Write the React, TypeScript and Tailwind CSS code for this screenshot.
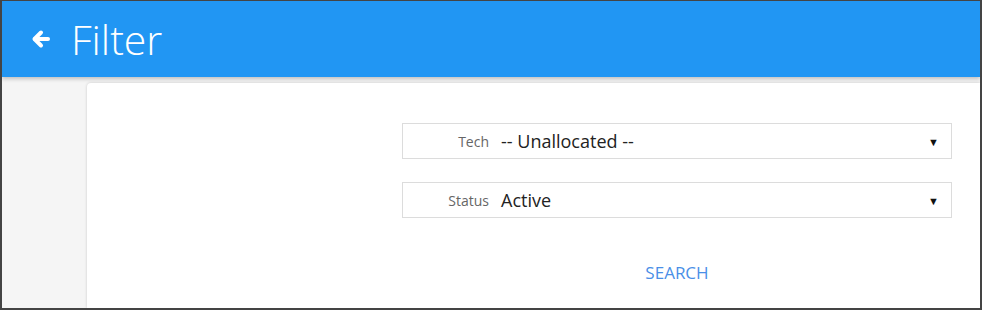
function BackArrow() {
  return (
    <svg viewBox="0 0 20 20" className="ml-[29px] h-[20px] w-[20px]" fill="none" stroke="currentColor" strokeWidth={4} strokeLinecap="round" strokeLinejoin="round">
      <path d="M17 10H4" />
      <path d="M10 3.5L3.5 10L10 16.5" />
    </svg>
  );
}

function SelectBox({ label, value }: { label: string; value: string }) {
  return (
    <div className="flex h-[36px] items-center border border-[#dcdcdc] bg-white">
      <span className="w-[86px] shrink-0 text-right text-[14px] text-[#666]">{label}</span>
      <span className="ml-[12px] flex-1 text-[18px] text-[#222]">{value}</span>
      <span className="mr-[12px] text-[11px] leading-none text-[#111]">▼</span>
    </div>
  );
}

export default function App() {
  return (
    <div
      className="flex h-[310px] w-[982px] flex-col overflow-hidden border-t border-r-2 border-b-2 border-l-2 border-[#444] bg-[#f5f5f5]"
      style={{ fontFamily: '"Open Sans", "Liberation Sans", sans-serif' }}
    >
      <header className="relative z-10 flex h-[76px] shrink-0 items-center bg-[#2196f3] text-white shadow-[0_2px_4px_rgba(0,0,0,0.22)]">
        <BackArrow />
        <h1 className="ml-[20px] text-[41px] font-light leading-none">Filter</h1>
      </header>

      <div className="flex flex-1 pt-[6px]">
        <div className="w-[85px] shrink-0" />
        <main className="flex flex-1 flex-col items-end rounded-tl-sm bg-white pt-[40px] pr-[28px] shadow-[0_0_3px_rgba(0,0,0,0.18)]">
          <div className="flex w-[550px] flex-col gap-[23px]">
            <SelectBox label="Tech" value="-- Unallocated --" />
            <SelectBox label="Status" value="Active" />
            <button className="mt-[11px] self-center px-4 py-2 text-[17px] uppercase text-[#4a8fe7]">
              Search
            </button>
          </div>
        </main>
      </div>
    </div>
  );
}
